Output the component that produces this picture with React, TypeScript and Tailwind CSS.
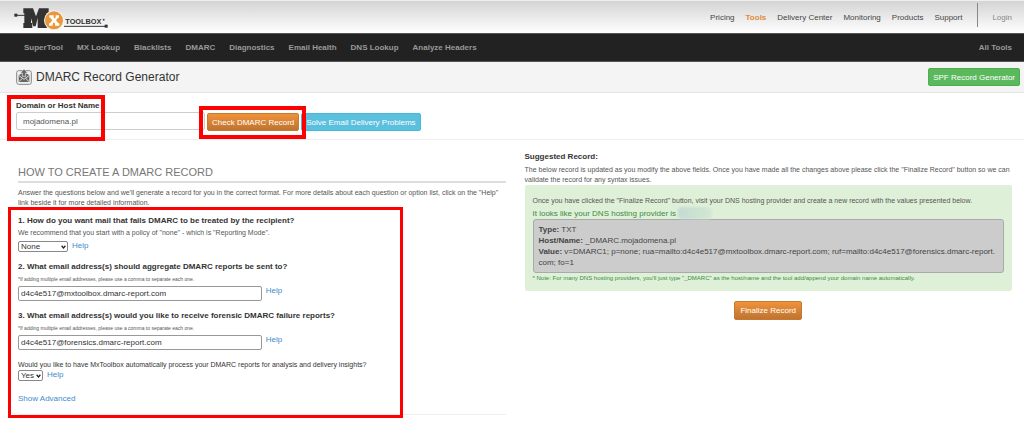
import { useState } from 'react';
import type { ReactNode } from 'react';

const topLinks = ['Pricing', 'Tools', 'Delivery Center', 'Monitoring', 'Products', 'Support'];

const toolLinks = [
  'SuperTool',
  'MX Lookup',
  'Blacklists',
  'DMARC',
  'Diagnostics',
  'Email Health',
  'DNS Lookup',
  'Analyze Headers',
];

function Logo() {
  return (
    <svg viewBox="42 0 285 96" className="h-8 w-[95px]" role="img" aria-label="MxToolbox">
      <rect x="43" y="38" width="9" height="9" fill="#333" />
      <path d="M48 43H76" stroke="#333" strokeWidth="3" />
      <path
        d="M70 22H99L108 46L117 22H146V37H142V66H146V81H113V50L107 76H100L93 52V66H97V81H70V66H73V37H70Z"
        fill="#333"
      />
      <circle cx="162" cy="58" r="30" fill="#f4f4f4" />
      <circle cx="162" cy="58" r="27" fill="#ea963a" />
      <path
        d="M148 43H161V49L164 53L167 49V43H177V50H174L168 58L175 67H178V74H165V68L162 64L158 68V74H147V67H150L157 58L151 50H148Z"
        fill="#fff"
      />
      <text x="196" y="69" fontSize="22" fontWeight="700" fill="#333" fontFamily="'Liberation Sans', sans-serif">
        TOOLBOX
      </text>
      <circle cx="311" cy="56" r="3" fill="#555" />
      <path d="M192 76H320" stroke="#333" strokeWidth="3" />
      <rect x="314" y="71" width="9" height="9" fill="#333" />
    </svg>
  );
}

function RecordIcon() {
  return (
    <svg viewBox="0 0 48 48" className="size-4" aria-hidden="true">
      <rect x="2" y="5" width="44" height="41" rx="6" fill="#f0f0f0" stroke="#888" strokeWidth="3" />
      <path d="M8 19L24 8L40 19V39H8Z" fill="#666" />
      <path d="M24 0L35 12H29V22H19V12H13Z" fill="#666" stroke="#eee" strokeWidth="2" />
      <path d="M9 20L24 31L39 20M9 38L19 28M39 38L29 28" fill="none" stroke="#eee" strokeWidth="2.5" />
    </svg>
  );
}

function HelpLink() {
  return (
    <a href="#help" className="leading-[9px] text-[#428bca]">
      Help
    </a>
  );
}

interface SmallSelectProps {
  id: string;
  options: string[];
  className: string;
}

function SmallSelect({ id, options, className }: SmallSelectProps) {
  return (
    <span className="relative inline-flex">
      <select
        id={id}
        className={`h-[11px] appearance-none rounded-[2px] border border-[#888] bg-white pl-[2px] leading-[9px] text-[#333] ${className}`}
      >
        {options.map((option) => (
          <option key={option}>{option}</option>
        ))}
      </select>
      <svg viewBox="0 0 8 6" className="pointer-events-none absolute top-[4px] right-[2px] h-[4px] w-[5px]">
        <path d="M1 1L4 4.5L7 1" fill="none" stroke="#222" strokeWidth="2" />
      </svg>
    </span>
  );
}

interface EmailQuestionProps {
  id: string;
  question: string;
  defaultValue: string;
}

function EmailQuestion({ id, question, defaultValue }: EmailQuestionProps) {
  return (
    <div className="mb-[9px]">
      <label htmlFor={id} className="block leading-3 font-bold">
        {question}
      </label>
      <p className="mt-[1px] text-[5px] leading-[10px] text-[#555]">
        *If adding multiple email addresses, please use a comma to separate each one.
      </p>
      <div className="mt-[2px] flex items-start gap-1">
        <input
          id={id}
          type="text"
          defaultValue={defaultValue}
          className="h-[15px] w-1/2 rounded-[2px] border border-[#999] bg-white px-[2px]"
        />
        <HelpLink />
      </div>
    </div>
  );
}

function Highlight({ className }: { className: string }) {
  return <div className={`pointer-events-none absolute border-[#fe0000] ${className}`} />;
}

function RecordLine({ label, children }: { label: string; children: ReactNode }) {
  return (
    <p className="break-all">
      <strong>{label}</strong> {children}
    </p>
  );
}

export default function App() {
  const [domain, setDomain] = useState('mojadomena.pl');

  return (
    <div className="relative min-h-screen bg-white font-['Liberation_Sans',Arial,sans-serif] text-[8px] leading-[11px] text-[#333]">
      <header className="flex h-[33px] items-center justify-between border-t border-[#eee] bg-linear-to-b from-[#d4d4d4] to-white pr-3 pl-[14px]">
        <a href="#home">
          <Logo />
        </a>
        <nav className="flex h-full items-center gap-[11px]">
          {topLinks.map((link) => (
            <a key={link} href="#top" className={link === 'Tools' ? 'font-bold text-[#e08a35]' : 'text-[#444]'}>
              {link}
            </a>
          ))}
          <span className="mt-[2px] ml-1 h-6 w-px self-start bg-[#888]" />
          <a href="#login" className="ml-[3px] text-[#888]">
            Login
          </a>
        </nav>
      </header>

      <nav className="flex h-[29px] items-center border-y border-[#555] bg-[#222] pr-3 pl-6 font-bold text-[#999]">
        <div className="flex gap-[14px]">
          {toolLinks.map((link) => (
            <a key={link} href="#tool">
              {link}
            </a>
          ))}
        </div>
        <a href="#all" className="ml-auto">
          All Tools
        </a>
      </nav>

      <div className="flex h-[31px] items-center gap-1 border-b border-[#e5e5e5] bg-[#f4f4f4] pr-1 pl-4">
        <RecordIcon />
        <h1 className="text-[12px] leading-4">DMARC Record Generator</h1>
        <button className="ml-auto h-[18px] rounded-[2px] border border-[#4cae4c] bg-[#5cb85c] px-[4px] text-white">
          SPF Record Generator
        </button>
      </div>

      <form
        className="flex h-[47px] items-start border-b border-[#eee] pt-[7px] pl-4"
        onSubmit={(e) => e.preventDefault()}
      >
        <div className="w-[189px]">
          <label htmlFor="domain" className="block leading-3 font-bold">
            Domain or Host Name
          </label>
          <input
            id="domain"
            type="text"
            value={domain}
            onChange={(e) => setDomain(e.target.value)}
            className="block h-[18px] w-full rounded-[2px] border border-[#ccc] px-[6px] text-[#555]"
          />
        </div>
        <div className="mt-[13px] ml-[2px] flex gap-[2px]">
          <button className="h-[18px] rounded-[2px] border border-[#c67a30] bg-linear-to-b from-[#f0923a] to-[#bf7430] px-[4px] text-white">
            Check DMARC Record
          </button>
          <button className="h-[18px] rounded-[2px] border border-[#46b8da] bg-[#5bc0de] px-[4px] text-white">
            Solve Email Delivery Problems
          </button>
        </div>
      </form>

      <main className="grid grid-cols-2 gap-[19px] pr-3 pl-[18px]">
        <section className="border-b border-[#eee] pt-[25px] pb-[10px]">
          <h2 className="border-b-2 border-[#ddd] pb-[2px] text-[11px] leading-[14px] text-[#777]">
            HOW TO CREATE A DMARC RECORD
          </h2>
          <p className="mt-[5px] text-[7px] leading-[10px] text-[#555]">
            Answer the questions below and we'll generate a record for you in the correct format. For more details
            about each question or option list, click on the "Help" link beside it for more detailed information.
          </p>

          <div className="mt-[7px] mb-[9px]">
            <label htmlFor="policy" className="block leading-3 font-bold">
              1. How do you want mail that fails DMARC to be treated by the recipient?
            </label>
            <p className="text-[7px] leading-3 text-[#555]">
              We recommend that you start with a policy of "none" - which is "Reporting Mode".
            </p>
            <div className="mt-[2px] flex items-start gap-1">
              <SmallSelect id="policy" options={['None', 'Quarantine', 'Reject']} className="w-[50px]" />
              <HelpLink />
            </div>
          </div>

          <EmailQuestion
            id="aggregate"
            question="2. What email address(s) should aggregate DMARC reports be sent to?"
            defaultValue="d4c4e517@mxtoolbox.dmarc-report.com"
          />
          <EmailQuestion
            id="forensic"
            question="3. What email address(s) would you like to receive forensic DMARC failure reports?"
            defaultValue="d4c4e517@forensics.dmarc-report.com"
          />

          <label htmlFor="process" className="block text-[7px]">
            Would you like to have MxToolbox automatically process your DMARC reports for analysis and delivery
            insights?
          </label>
          <div className="flex items-start gap-1">
            <SmallSelect id="process" options={['Yes', 'No']} className="w-[25px]" />
            <HelpLink />
          </div>
          <a href="#advanced" className="mt-3 block text-[#428bca]">
            Show Advanced
          </a>
        </section>

        <section className="pt-[11px]">
          <h3 className="leading-3 font-bold">Suggested Record:</h3>
          <p className="mt-[2px] text-[7px] leading-[10px] text-[#555]">
            The below record is updated as you modify the above fields. Once you have made all the changes above
            please click the "Finalize Record" button so we can validate the record for any syntax issues.
          </p>
          <div className="rounded-[2px] bg-[#dff0d8] px-2 pt-[10px] pb-2 text-[#3c8a3f]">
            <p className="text-[7px] leading-3 text-[#555]">
              Once you have clicked the "Finalize Record" button, visit your DNS hosting provider and create a new
              record with the values presented below.
            </p>
            <p className="flex h-3 items-center">
              It looks like your DNS hosting provider is
              <span className="ml-[2px] h-3 w-[34px] rounded-[4px] bg-linear-to-r from-[#c3dbd3] to-[#d3e8d2] blur-[1px]" />
            </p>
            <div className="rounded-[3px] border border-[#aaa] bg-[#ccc] px-[5px] py-[4px] text-[#444]">
              <RecordLine label="Type:">TXT</RecordLine>
              <RecordLine label="Host/Name:">_DMARC.{domain}</RecordLine>
              <RecordLine label="Value:">
                v=DMARC1; p=none; rua=mailto:d4c4e517@mxtoolbox.dmarc-report.com;
                ruf=mailto:d4c4e517@forensics.dmarc-report.com; fo=1
              </RecordLine>
            </div>
            <p className="text-[6px] leading-[10px]">
              * Note: For many DNS hosting providers, you'll just type "_DMARC" as the host/name and the tool
              add/append your domain name automatically.
            </p>
          </div>
          <button className="mx-auto mt-[10px] block h-[19px] rounded-[2px] border border-[#c67a30] bg-linear-to-b from-[#f0923a] to-[#bf7430] px-[5px] text-white">
            Finalize Record
          </button>
        </section>
      </main>

      <Highlight className="top-[95px] left-[7px] h-[46px] w-[98px] border-4" />
      <Highlight className="top-[106px] left-[199px] h-[33px] w-[107px] border-4" />
      <Highlight className="top-[207px] left-[8px] h-[211px] w-[395px] border-3" />
    </div>
  );
}
